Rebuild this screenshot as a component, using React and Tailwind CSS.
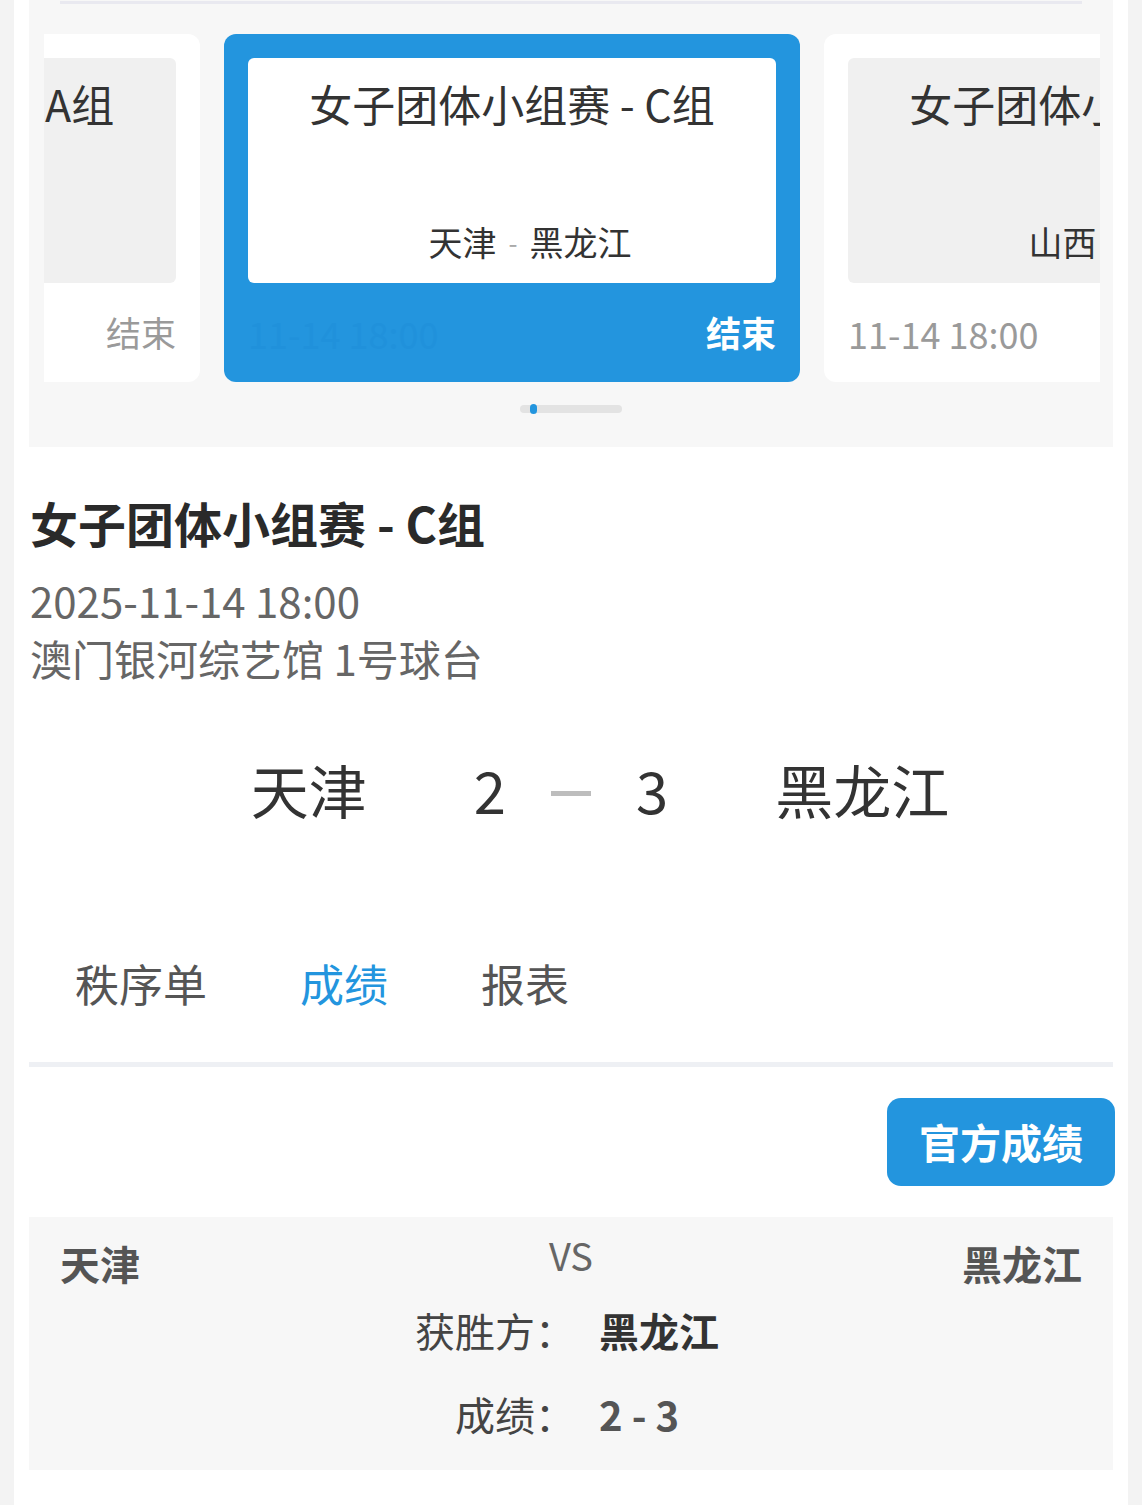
const FONT = { fontFamily: '"Noto Sans CJK SC", "Noto Sans", sans-serif' };

function MatchCard({ title, home, away, time, status, active }) {
  return (
    <div
      className={
        'w-[576px] h-[348px] shrink-0 rounded-xl px-6 pt-6 flex flex-col ' +
        (active ? 'bg-[#2395de]' : 'bg-white')
      }
    >
      <div
        className={
          'h-[225px] rounded-md flex flex-col items-center justify-between pt-[14px] pb-4 ' +
          (active ? 'bg-white' : 'bg-[#f0f0f0]')
        }
      >
        <div className="text-[43px] leading-[63px] text-[#333] whitespace-nowrap">{title}</div>
        <div className="pl-9 flex items-center text-[34px] leading-[51px] text-[#333] whitespace-nowrap">
          <span>{home}</span>
          <span className="mx-3 text-[#aaa] text-[26px]">-</span>
          <span>{away}</span>
        </div>
      </div>
      <div className="flex-1 flex items-center justify-between">
        <span className={'text-[36px] ' + (active ? 'text-[#2091db]' : 'text-[#9a9a9a]')}>{time}</span>
        <span className={'text-[35px] ' + (active ? 'text-white font-bold' : 'text-[#9a9a9a]')}>{status}</span>
      </div>
    </div>
  );
}

export default function App() {
  return (
    <div className="min-h-screen bg-[#f3f3f3]" style={FONT}>
      <div className="mx-[14px] bg-white min-h-[1505px] pb-8">
        {/* carousel */}
        <div className="mx-[15px] bg-[#f7f7f7] h-[447px] px-[15px] pt-px">
          <div className="h-[3px] mx-4 bg-[#e9e9f0]" />
          <div className="mt-[30px] mr-[-2px] overflow-hidden">
            <div className="flex gap-6 -translate-x-[420px]">
              <MatchCard title="女子团体小组赛 - A组" home="山东" away="广东" time="11-14 18:00" status="结束" />
              <MatchCard title="女子团体小组赛 - C组" home="天津" away="黑龙江" time="11-14 18:00" status="结束" active />
              <MatchCard title="女子团体小组赛 - C组" home="山西" away="内蒙古" time="11-14 18:00" status="结束" />
            </div>
          </div>
          <div className="mt-[23px] flex justify-center">
            <div className="w-[102px] h-2 rounded-full bg-[#e3e3e3] relative">
              <div className="absolute left-[10px] -top-px w-[7px] h-[10px] rounded-full bg-[#2395de]" />
            </div>
          </div>
        </div>

        {/* match info */}
        <div className="px-4">
          <h1 className="mt-[42px] text-[48px] leading-[67px] font-bold text-[#2a2a2a]">女子团体小组赛 - C组</h1>
          <div className="mt-[15px] text-[42px] leading-[58px] text-[#666]">2025-11-14 18:00</div>
          <div className="text-[42px] leading-[58px] text-[#666]">澳门银河综艺馆 1号球台</div>
        </div>

        {/* score */}
        <div className="mt-[62px] grid grid-cols-[1fr_auto_1fr] gap-x-[107px] items-center text-[58px] leading-[80px] text-[#333]">
          <div className="text-right">天津</div>
          <div className="flex items-center gap-[45px]">
            <span>2</span>
            <span className="w-10 h-[5px] mt-2 bg-[#bdbdbd]" />
            <span>3</span>
          </div>
          <div>黑龙江</div>
        </div>

        {/* tabs */}
        <div className="mt-[124px] pl-[61px] flex gap-[93px] text-[44px] leading-[60px]">
          <span className="text-[#555]">秩序单</span>
          <span className="text-[#2395de]">成绩</span>
          <span className="text-[#555]">报表</span>
        </div>
        <div className="mt-[49px] mx-[15px] h-[5px] bg-[#eef0f4]" />

        <div className="mt-[31px] mr-[13px] flex justify-end">
          <button className="w-[228px] h-[88px] rounded-[14px] bg-[#2395de] text-white text-[41px] font-bold">
            官方成绩
          </button>
        </div>

        {/* result */}
        <div className="mt-[31px] mx-[15px] bg-[#f7f7f7] px-[31px] pt-[18px] pb-7">
          <div className="grid grid-cols-3 items-start">
            <div className="text-[40px] leading-[56px] font-bold text-[#555]">天津</div>
            <div className="text-center text-[38px] leading-[40px] text-[#666]">VS</div>
            <div className="text-right text-[40px] leading-[56px] font-bold text-[#555]">黑龙江</div>
          </div>
          <div className="mt-[11px] flex pl-8 text-[40px] leading-[56px]">
            <div className="flex-1 text-right text-[#444]">获胜方：</div>
            <div className="flex-1 pl-6 font-bold text-[#333]">黑龙江</div>
          </div>
          <div className="mt-[28px] flex pl-8 text-[40px] leading-[56px]">
            <div className="flex-1 text-right text-[#444]">成绩：</div>
            <div className="flex-1 pl-6 font-bold text-[#555]">2 - 3</div>
          </div>
        </div>
      </div>
    </div>
  );
}
